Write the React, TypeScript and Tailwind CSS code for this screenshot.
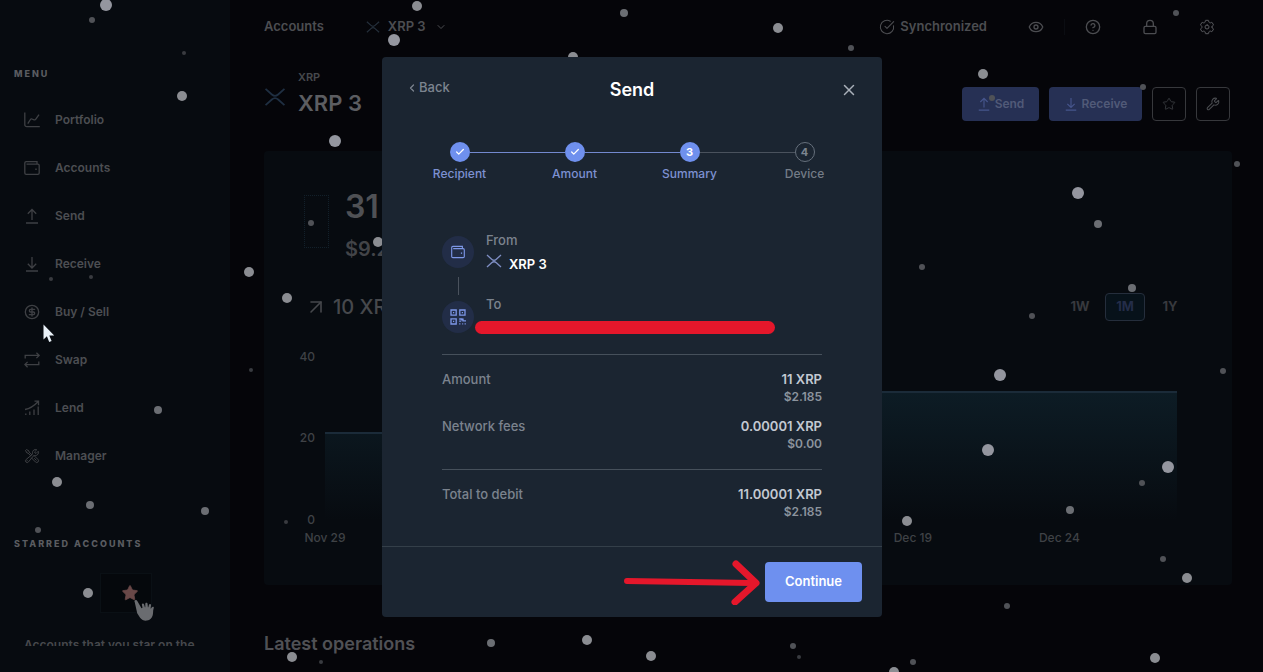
import React, { ReactElement, ReactNode } from 'react'
import {
  ArrowUpRight,
  Check,
  ChevronDown,
  ChevronLeft,
  CircleCheckBig,
  CircleDollarSign,
  CircleQuestionMark,
  Eye,
  Lock,
  Star,
  Wrench,
  X,
} from 'lucide-react'
import { HiOutlineWrenchScrewdriver } from 'react-icons/hi2'
import { IoSettingsOutline } from 'react-icons/io5'

type IconProps = { className?: string; children?: ReactNode }

const LineIcon: React.FC<IconProps> = ({ className, children }): ReactElement => (
  <svg viewBox="0 0 16 16" fill="none" stroke="currentColor" strokeWidth="1.3" className={className} aria-hidden="true">
    {children}
  </svg>
)

const XrpIcon: React.FC<IconProps> = ({ className }): ReactElement => (
  <svg viewBox="0 0 24 20" fill="none" stroke="currentColor" strokeWidth="2" className={className} aria-hidden="true">
    <path d="M1.5 1l7 6.2c2 1.8 5 1.8 7 0l7-6.2M1.5 19l7-6.2c2-1.8 5-1.8 7 0l7 6.2" />
  </svg>
)

const PortfolioIcon: React.FC<IconProps> = ({ className }): ReactElement => (
  <LineIcon className={className}>
    <path d="M.8.5v12.2a2 2 0 0 0 2 2h13M3.8 11.6l2.6-4.1c.4-.6.9-.7 1.5-.5l2.2.8c.7.2 1.3.1 1.7-.6l3.2-4.6" />
  </LineIcon>
)

const WalletIcon: React.FC<IconProps> = ({ className }): ReactElement => (
  <LineIcon className={className}>
    <path d="M13 4.2V1.6H2.2C1.3 1.6.8 2.2.8 3v10c0 .8.6 1.4 1.4 1.4h11.6c.8 0 1.4-.6 1.4-1.4V5.6c0-.8-.6-1.4-1.4-1.4H2.5" />
    <path d="M11.3 9.3h1.4" strokeWidth="1.6" />
  </LineIcon>
)

const SendIcon: React.FC<IconProps> = ({ className }): ReactElement => (
  <LineIcon className={className}>
    <path d="M8 12V1.5M3.8 5.7L8 1.5l4.2 4.2M2 15h12" />
  </LineIcon>
)

const ReceiveIcon: React.FC<IconProps> = ({ className }): ReactElement => (
  <LineIcon className={className}>
    <path d="M8 1v10.8M3.8 7.8L8 12l4.2-4.2M2 15h12" />
  </LineIcon>
)

const SwapIcon: React.FC<IconProps> = ({ className }): ReactElement => (
  <LineIcon className={className}>
    <path d="M1.2 6.5V3.4h14M12.4.7l2.8 2.7-2.8 2.7M14.8 9.5v3.1H.9M3.6 15.3L.9 12.6l2.7-2.7" />
  </LineIcon>
)

const LendIcon: React.FC<IconProps> = ({ className }): ReactElement => (
  <LineIcon className={className}>
    <path d="M1.8 15v-1.5M5.8 15v-3.5M10 15V9.5M14.2 15V6.5M1 9.5c5-.8 9-3.5 13-7.7M10.5 1.2h4v4" />
  </LineIcon>
)

const QrIcon: React.FC<IconProps> = ({ className }): ReactElement => (
  <LineIcon className={className}>
    <path d="M1 1h5.2v5.2H1zM9.8 1H15v5.2H9.8zM1 9.8h5.2V15H1z" />
    <path d="M3 3.6h1.2M11.8 3.6H13M3 12.4h1.2M9.2 10h2.6v1.600M13 9.600v2.200h3M9.200 12.200h2M9.200 14.800h1.200M12.200 14.800h1M14.600 14.800h1.200" />
  </LineIcon>
)

const menu = [
  { label: 'Portfolio', Icon: PortfolioIcon },
  { label: 'Accounts', Icon: WalletIcon },
  { label: 'Send', Icon: SendIcon },
  { label: 'Receive', Icon: ReceiveIcon },
  { label: 'Buy / Sell', Icon: CircleDollarSign },
  { label: 'Swap', Icon: SwapIcon },
  { label: 'Lend', Icon: LendIcon },
  { label: 'Manager', Icon: HiOutlineWrenchScrewdriver },
]

const Sidebar: React.FC = (): ReactElement => (
  <aside className="w-[230px] shrink-0 bg-[#070b10] pb-[26px]">
    <div className="flex h-full flex-col overflow-hidden pt-[66px]">
      <h2 className="px-3.5 text-[9px] leading-4 font-extrabold tracking-[2px] text-[#5a5c60]">MENU</h2>
      <nav className="mt-3.5 flex flex-col">
        {menu.map(({ label, Icon }) => (
          <a key={label} href="#" className="flex h-12 shrink-0 items-center gap-[15px] pl-6 text-xs font-semibold text-[#4c4e52]">
            <Icon className="size-4 text-[#3e4044]" />
            {label}
          </a>
        ))}
      </nav>
      <h2 className="mt-14 px-3.5 text-[9px] leading-4 font-extrabold tracking-[2px] text-[#5a5c60]">STARRED ACCOUNTS</h2>
      <div className="relative mt-[21px] ml-[100px] flex h-10 w-[52px] shrink-0 items-center justify-center border border-[#0a1015] bg-[#05080c] pl-2">
        <Star className="size-[18px] fill-[#694848] text-[#694848]" strokeWidth={1} />
        <svg viewBox="0 0 22 24" className="absolute top-[25px] left-8 h-6 w-[22px] fill-[#6a6c70]" aria-hidden="true">
          <path d="M2.2 1.2c.8-.5 1.7-.1 2.100.7l4.200 7.300 1-.4-.6-3c-.1-.9.2-1.300.8-1.400.7-.1 1.200.3 1.400 1l.8 2.900.4-.1V5c0-.8.4-1.200 1.100-1.200s1.200.4 1.200 1.200l.3 3.200.4.1.6-2.300c.2-.7.7-1 1.300-.9.7.2.9.7.8 1.400l-.4 2.900.4.2.9-1.400c.4-.6.9-.7 1.400-.4.6.4.6.9.4 1.500-.9 2.400-.3 4.700-1 7-.8 2.800-2.600 4.900-5.700 5.300-3 .4-5.100-.8-6.900-2.900l-2.900-4.500L1.700 3.100c-.4-.8-.3-1.500.5-1.900z" />
        </svg>
      </div>
      <p className="mt-[23px] pl-6 text-xs leading-[18px] font-semibold whitespace-nowrap text-[#46484c]">Accounts that you star on the</p>
    </div>
  </aside>
)

const TopBar: React.FC = (): ReactElement => (
  <header className="flex h-[53px] shrink-0 items-center justify-between pr-[17px] text-[13px] font-semibold text-[#4c4d51]">
    <div className="flex items-center">
      <a href="#">Accounts</a>
      <button type="button" className="ml-[42px] flex items-center gap-2">
        <XrpIcon className="h-3 w-3.5 text-[#25303c]" />
        XRP 3
        <ChevronDown className="ml-px size-3" />
      </button>
    </div>
    <div className="flex items-center">
      <CircleCheckBig className="mr-[5px] size-4" strokeWidth={1.6} />
      Synchronized
      <button type="button" aria-label="Hide balances" className="ml-[41px]">
        <Eye className="size-4" />
      </button>
      <span className="mx-5 h-4 w-px bg-[#0b0d12]" />
      <button type="button" aria-label="Help">
        <CircleQuestionMark className="size-4" />
      </button>
      <button type="button" aria-label="Lock" className="ml-[41px]">
        <Lock className="size-4" />
      </button>
      <button type="button" aria-label="Settings" className="ml-[41px]">
        <IoSettingsOutline className="size-4 text-[#5a5b5f]" />
      </button>
    </div>
  </header>
)

const AccountHeader: React.FC = (): ReactElement => (
  <div className="flex h-[98px] shrink-0 justify-between pt-4">
    <div className="flex gap-3">
      <XrpIcon className="mt-[19px] h-[18px] w-[22px] text-[#1f2f42]" />
      <div>
        <p className="text-[11px] leading-4 font-semibold text-[#47494d]">XRP</p>
        <h1 className="mt-1 text-[22px] leading-7 font-semibold text-[#5c5d61]">XRP 3</h1>
      </div>
    </div>
    <div className="flex gap-2.5 pt-[18px] pr-0.5 text-xs font-semibold text-[#515a78]">
      <button type="button" className="flex h-[34px] w-[77px] items-center justify-center gap-1 rounded bg-[#263054]">
        <SendIcon className="size-3.5 text-[#46558c]" />
        Send
      </button>
      <button type="button" className="flex h-[34px] w-[93px] items-center justify-center gap-1 rounded bg-[#263054]">
        <ReceiveIcon className="size-3.5 text-[#46558c]" />
        Receive
      </button>
      <button type="button" aria-label="Star account" className="flex size-[34px] items-center justify-center rounded border border-[#37383c] text-[#37393d]">
        <Star className="size-3.5" strokeWidth={1.6} />
      </button>
      <button type="button" aria-label="Account settings" className="flex size-[34px] items-center justify-center rounded border border-[#37383c] text-[#4a4c50]">
        <Wrench className="size-3.5" strokeWidth={1.8} />
      </button>
    </div>
  </div>
)

// position of each label along the time axis, in percent
const dates = [
  { label: 'Nov 29', x: 0 },
  { label: 'Dec 19', x: 69 },
  { label: 'Dec 24', x: 86.2 },
]

const BalanceChart: React.FC = (): ReactElement => (
  <svg className="h-[163px] w-full overflow-visible fill-[#3f4246] text-xs font-medium" role="img" aria-label="Balance history">
    <svg viewBox="0 0 852 163" width="100%" height="163" preserveAspectRatio="none">
      <defs>
        <linearGradient id="area" x1="0" y1="0" x2="0" y2="1">
          <stop offset="0" stopColor="#0d1c25" />
          <stop offset="1" stopColor="#070b10" />
        </linearGradient>
      </defs>
      <path d="M0 76H300V35H852V163H0z" fill="url(#area)" />
      <path d="M0 76H300V35H852" fill="none" stroke="#1b2b39" strokeWidth="2" />
    </svg>
    <text x="-10" y="4" textAnchor="end">40</text>
    <text x="-10" y="85" textAnchor="end">20</text>
    <text x="-10" y="167" textAnchor="end">0</text>
    {dates.map(({ label, x }) => (
      <text key={label} x={`${x}%`} y="185" textAnchor="middle">{label}</text>
    ))}
  </svg>
)

const BalanceCard: React.FC = (): ReactElement => (
  <section className="flex h-[434px] shrink-0 flex-col rounded bg-[#070b10] px-10 pt-9">
    <div className="flex gap-4">
      <div className="mt-2 h-[53px] w-[25px] border border-dotted border-[#12202a]" />
      <div className="text-[#4f5155]">
        <p className="text-[32px] leading-10 font-semibold">31</p>
        <p className="mt-0.5 text-xl leading-10 font-semibold text-[#424448]">$9.2</p>
      </div>
    </div>
    <div className="mt-6 flex items-center justify-between">
      <p className="flex items-center gap-[5px] text-xl font-medium text-[#46484c]">
        <ArrowUpRight className="size-6" strokeWidth={1.6} />
        10 XRP
      </p>
      <div className="flex gap-[5px] pr-0.5 text-[13px] font-bold text-[#37393e]">
        <button type="button" className="h-7 w-10">1W</button>
        <button type="button" className="h-7 w-10 rounded border border-[#252e3c] bg-[#07121a] text-[#242d49]">1M</button>
        <button type="button" className="h-7 w-10">1Y</button>
      </div>
    </div>
    <div className="mt-9 mr-[15px] ml-[21px]">
      <BalanceChart />
    </div>
  </section>
)

// x, y, radius
const flakes = [
  [106, 5, 6], [182, 96, 5], [249, 272, 5], [394, 40, 6], [335, 141, 6], [378, 242, 5], [287, 298, 5],
  [417, 6, 5], [624, 13, 4], [778, 28, 5], [573, 57, 5], [983, 74, 5], [1078, 193, 6], [1000, 375, 6],
  [988, 450, 6], [1168, 467, 6], [907, 521, 5], [1187, 578, 5], [1155, 658, 5], [894, 672, 5], [88, 593, 5],
  [57, 482, 5], [158, 410, 4], [90, 505, 4], [205, 511, 4], [292, 657, 5], [587, 640, 5], [651, 656, 5],
  [491, 643, 4], [1070, 510, 4], [1098, 224, 4], [38, 530, 3], [92, 20, 3], [184, 53, 2], [51, 279, 2],
  [91, 277, 2], [251, 370, 2], [286, 522, 2], [311, 223, 3], [321, 662, 2], [851, 48, 3], [922, 267, 3],
  [1032, 316, 3], [1132, 288, 4], [1237, 164, 3], [1223, 371, 3], [1142, 483, 3], [1163, 559, 3],
  [1007, 606, 3], [913, 662, 3], [793, 646, 3], [799, 657, 2], [1176, 13, 3], [1143, 87, 3], [992, 98, 3],
]

const flakeColors = ['', '', '#393b40', '#505257', '#6b6e73', '#8b8d92', '#94969f']

const Snow: React.FC = (): ReactElement => (
  <svg className="pointer-events-none absolute inset-0 size-full" aria-hidden="true">
    {flakes.map(([x, y, r]) => (
      <circle key={`${x}-${y}`} cx={x} cy={y} r={r} fill={flakeColors[r]} />
    ))}
  </svg>
)

const steps = ['Recipient', 'Amount', 'Summary', 'Device']
const current = 2

const Stepper: React.FC = (): ReactElement => (
  <ol className="mt-[19px] grid grid-cols-4 px-5">
    {steps.map((step, i) => (
      <li key={step} className="flex flex-col items-center">
        <div className="flex w-full items-center">
          <span className={`h-px flex-1 ${i === 0 ? '' : i <= current ? 'bg-[#7389cf]' : 'bg-[#4a525d]'}`} />
          <span
            className={`flex size-5 items-center justify-center rounded-full text-[11px] font-bold ${
              i <= current ? 'bg-[#6f90ee] text-white' : 'border border-[#66707c] text-[#7d8590]'
            }`}
          >
            {i < current ? <Check className="size-2.5" strokeWidth={3} /> : i + 1}
          </span>
          <span className={`h-px flex-1 ${i === steps.length - 1 ? '' : i < current ? 'bg-[#7389cf]' : 'bg-[#4a525d]'}`} />
        </div>
        <span className={`mt-0.5 text-xs leading-5 font-medium ${i <= current ? 'text-[#7d91d2]' : 'text-[#747c87]'}`}>{step}</span>
      </li>
    ))}
  </ol>
)

type AmountRowProps = { label: string; amount: string; fiat: string }

const AmountRow: React.FC<AmountRowProps> = ({ label, amount, fiat }): ReactElement => (
  <div className="flex justify-between text-[13px] leading-[18px]">
    <dt className="font-medium text-[#7b838e]">{label}</dt>
    <dd className="text-right font-semibold text-[#c3c9d2]">
      {amount}
      <span className="block text-xs leading-[18px] text-[#8c949e]">{fiat}</span>
    </dd>
  </div>
)

const SendModal: React.FC = (): ReactElement => (
  <div className="absolute inset-0 flex items-center justify-center pt-0.5 pl-px">
    <div role="dialog" aria-label="Send" className="flex h-[560px] w-[500px] flex-col rounded-sm bg-[#1b2531]">
      <div className="grid h-[66px] shrink-0 grid-cols-3 items-center px-6">
        <button type="button" className="flex items-center gap-px justify-self-start pb-1 text-[13px] font-medium text-[#7c848f]">
          <ChevronLeft className="size-3" strokeWidth={2.5} />
          Back
        </button>
        <h2 className="text-center text-lg font-semibold text-white">Send</h2>
        <button type="button" aria-label="Close" className="justify-self-end text-[#a9b0b9]">
          <X className="size-[18px]" />
        </button>
      </div>

      <Stepper />

      <div className="mt-12 flex gap-3 px-[60px]">
        <div className="flex flex-col items-center pt-1">
          <span className="flex size-8 items-center justify-center rounded-full bg-[#222d47] text-[#7d97e8]">
            <WalletIcon className="size-3.5" />
          </span>
          <span className="mt-[9px] mb-1.5 h-[18px] w-px bg-[#4a525d]" />
          <span className="flex size-8 items-center justify-center rounded-full bg-[#222d47] text-[#7d97e8]">
            <QrIcon className="size-4" />
          </span>
        </div>
        <div className="flex flex-col text-[13px] leading-4 font-medium text-[#7b838e]">
          <p>From</p>
          <p className="mt-1 flex gap-[7px] leading-6 font-semibold text-white">
            <XrpIcon className="mt-0.5 h-3.5 w-4 text-[#7f8fc4]" />
            XRP 3
          </p>
          <p className="mt-5">To</p>
          <span className="mt-[9px] -ml-[11px] h-[13px] w-[300px] rounded-full bg-[#e5172b]" />
        </div>
      </div>

      <dl className="mx-[60px] mt-5 flex flex-col gap-[11px] border-t border-[#46505b] pt-[15px]">
        <AmountRow label="Amount" amount="11 XRP" fiat="$2.185" />
        <AmountRow label="Network fees" amount="0.00001 XRP" fiat="$0.00" />
      </dl>
      <dl className="mx-[60px] mt-4 border-t border-[#46505b] pt-[15px]">
        <AmountRow label="Total to debit" amount="11.00001 XRP" fiat="$2.185" />
      </dl>

      <div className="mt-auto flex h-[71px] items-center justify-end gap-[5px] border-t border-[#343f49] px-5">
        <svg viewBox="0 0 136 46" className="h-[46px] w-[136px]" fill="none" stroke="#e5172b" strokeWidth="6" strokeLinecap="round" aria-hidden="true">
          <path d="M3 22L128 24" />
          <path d="M112 5L132 24L111 43" strokeWidth="7" strokeLinejoin="round" />
        </svg>
        <button type="button" className="h-10 w-[97px] rounded bg-[#6e90ef] text-[13px] font-semibold text-white">Continue</button>
      </div>
    </div>
  </div>
)

const App: React.FC = (): ReactElement => (
  <div className="relative flex h-screen overflow-hidden bg-[#050509] font-['Inter',sans-serif]">
    <Sidebar />
    <main className="flex min-w-0 flex-1 flex-col pr-[31px] pl-[34px]">
      <TopBar />
      <AccountHeader />
      <BalanceCard />
      <h2 className="mt-[45px] text-lg leading-7 font-semibold text-[#505155]">Latest operations</h2>
    </main>
    <Snow />
    <SendModal />
    <svg viewBox="0 0 12 19" className="pointer-events-none absolute top-[324px] left-[43px] h-[19px] w-3 fill-[#e9f1f8]" aria-hidden="true">
      <path d="M.5.5v15l3.400-3.200 2.300 5.600 2.400-1-2.300-5.400h4.900z" />
    </svg>
  </div>
)

export default App
